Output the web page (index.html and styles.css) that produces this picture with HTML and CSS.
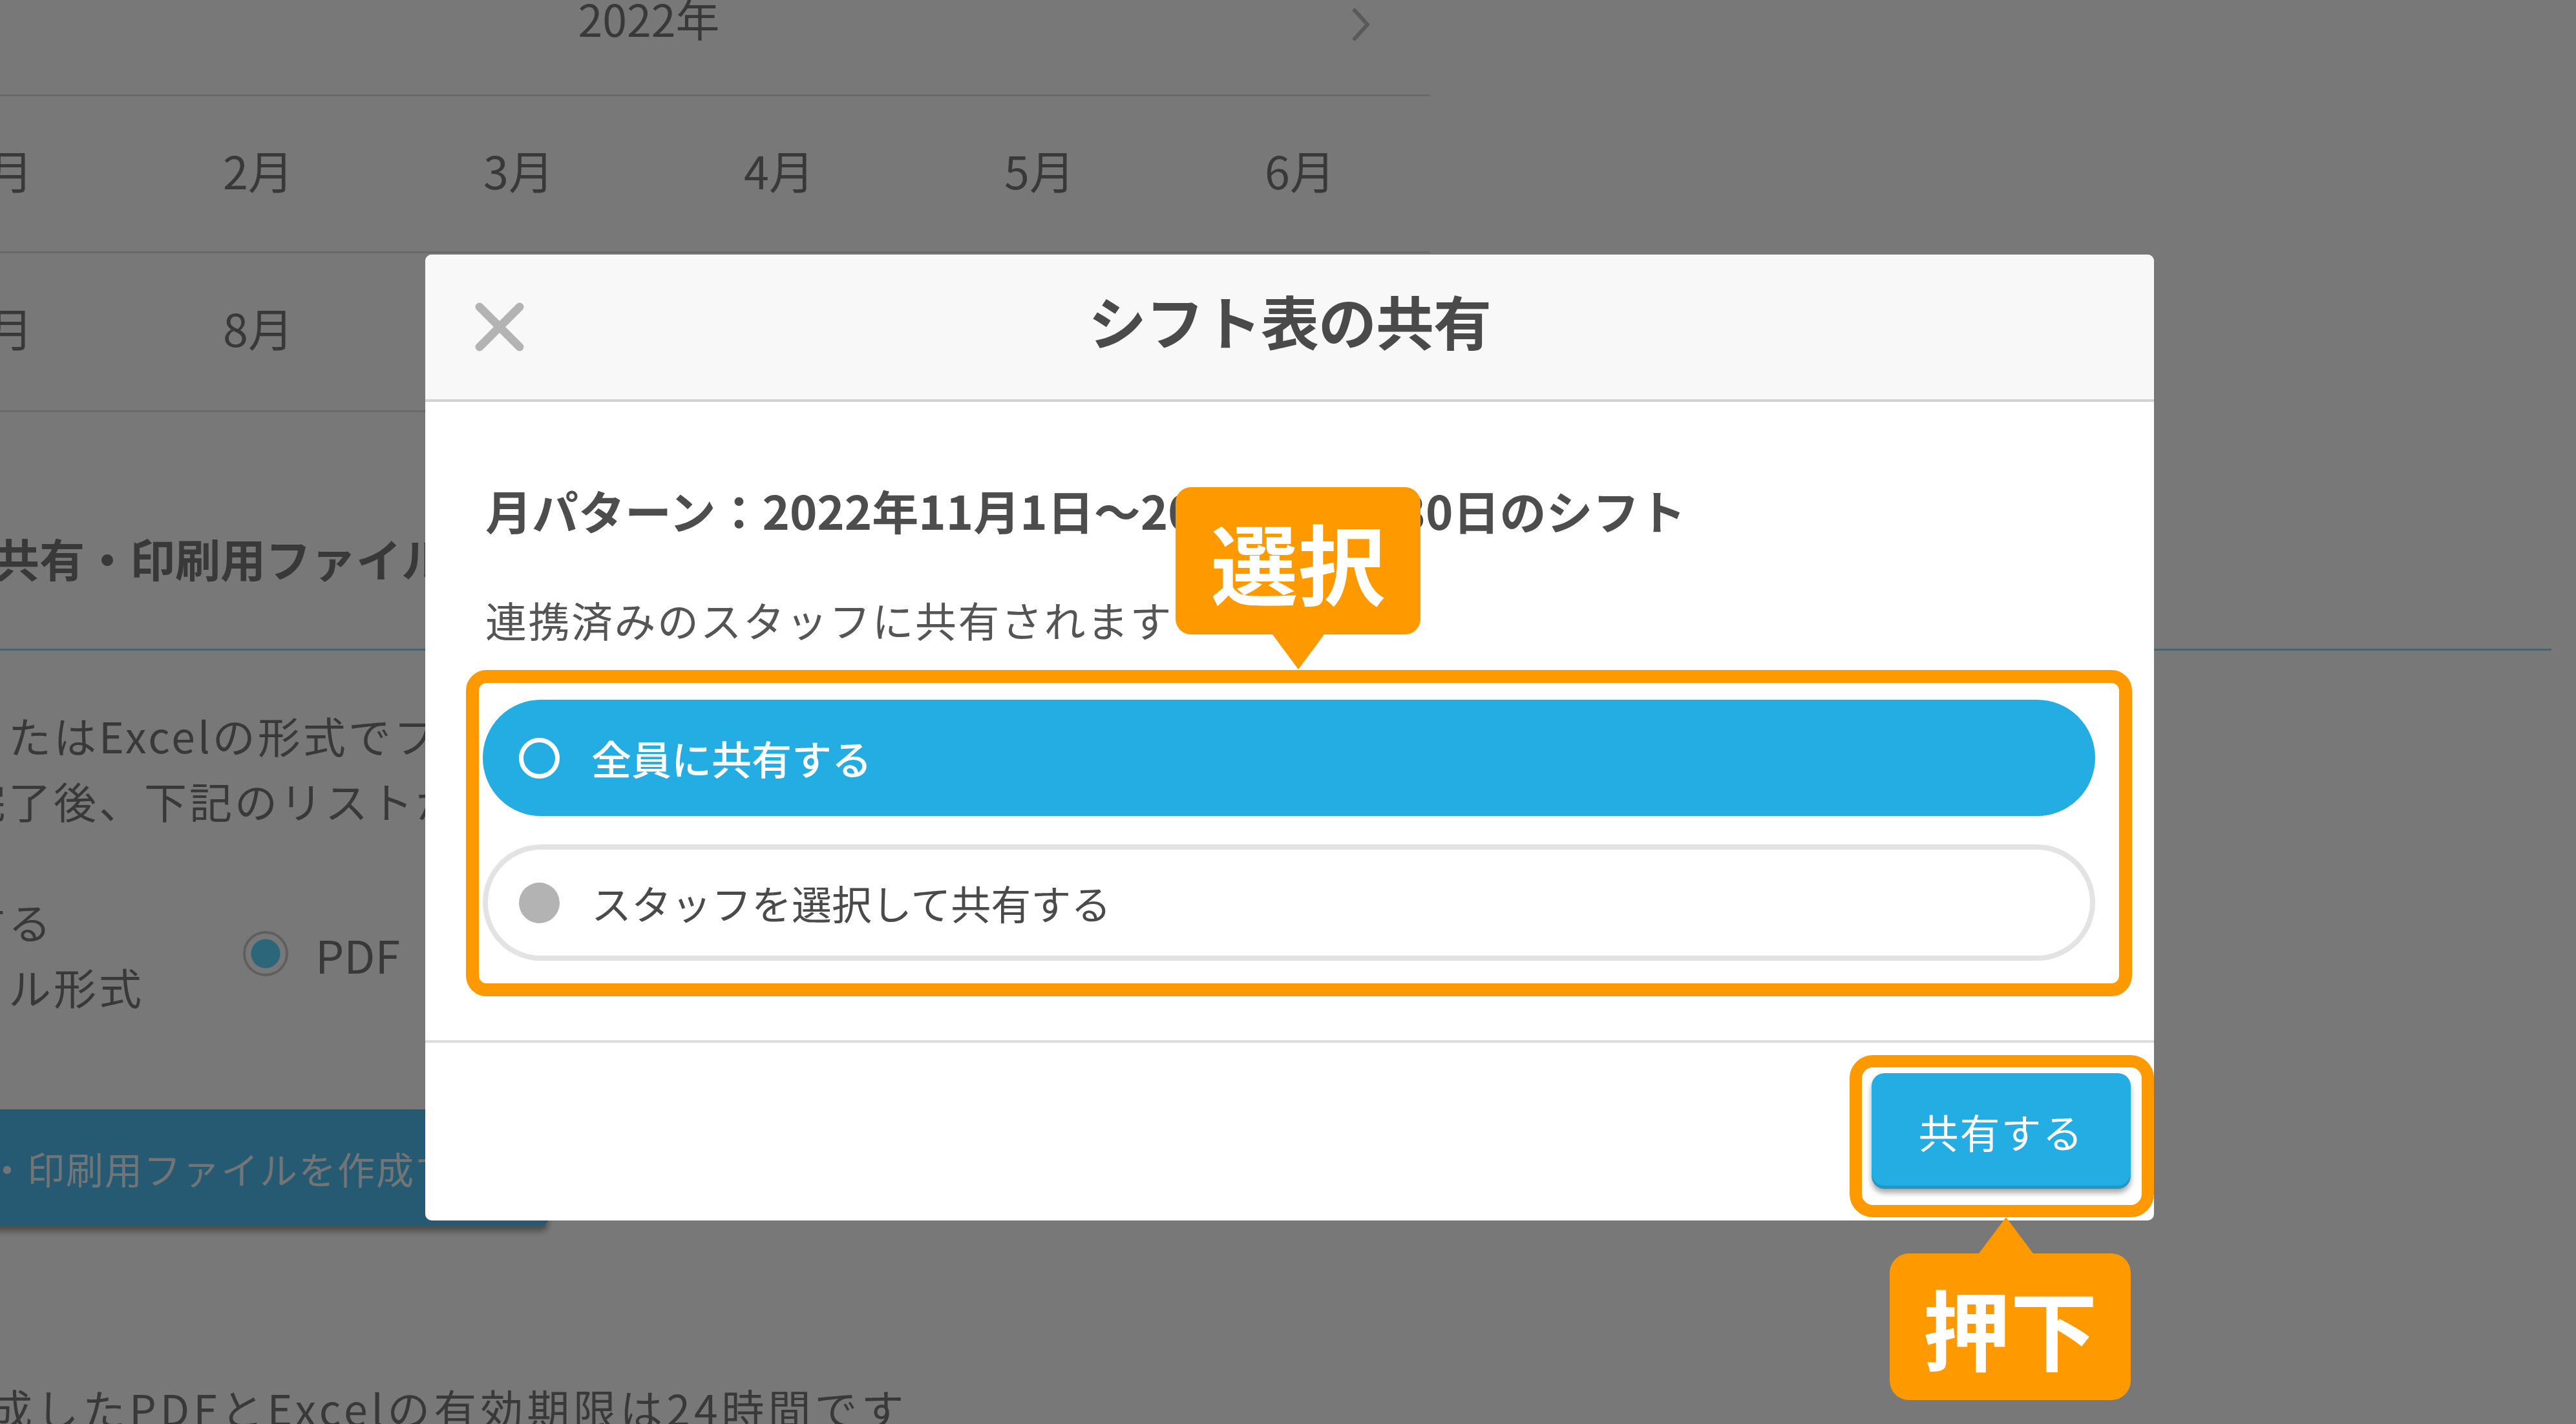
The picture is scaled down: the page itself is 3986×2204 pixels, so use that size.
FILE: index.html
```html
<!doctype html>
<html lang="ja">
  <head>
    <meta charset="utf-8" />
    <title>シフト表の共有</title>
    <meta name="viewport" content="width = device-width, initial-scale = 1" />
    <link rel="stylesheet" href="styles.css">
  </head>
  <body>
    <div id="page">
      <div class="calendar">
        <div class="year-row">
          <span></span>
          <span class="year">2022年</span>
          <svg class="next" width="28" height="52" viewBox="0 0 28 52">
            <polyline points="4,4 24,26 4,48" />
          </svg>
        </div>
        <div class="months">
          <span>1月</span><span>2月</span><span>3月</span>
          <span>4月</span><span>5月</span><span>6月</span>
        </div>
        <div class="months">
          <span>7月</span><span>8月</span><span>9月</span>
          <span>10月</span><span>11月</span><span>12月</span>
        </div>
      </div>

      <div class="files">
        <h2 class="files-title">共有・印刷用ファイル作成</h2>
        <p class="files-desc">
          またはExcelの形式でファイルを作成します。<br />
          完了後、下記のリストからダウンロードできます。
        </p>
        <div class="format-row">
          <div class="format-label">共有する<br />ファイル形式</div>
          <span class="format-radio"></span>
          <span class="format-name">PDF</span>
        </div>
        <div class="files-btn">共有・印刷用ファイルを作成する</div>
        <p class="files-note">作成したPDFとExcelの有効期限は24時間です</p>
      </div>
    </div>

    <div class="overlay"></div>

    <div class="modal">
      <div class="modal-header">
        <svg class="close" width="76" height="76" viewBox="0 0 76 76">
          <line x1="7" y1="7" x2="69" y2="69" />
          <line x1="69" y1="7" x2="7" y2="69" />
        </svg>
        <h1 class="modal-title">シフト表の共有</h1>
        <span></span>
      </div>

      <div class="modal-body">
        <p class="period">月パターン：2022年11月1日〜2022年11月30日のシフト</p>
        <p class="lead">連携済みのスタッフに共有されます</p>
        <div class="options">
          <div class="option is-selected">
            <span class="radio"></span>
            <span>全員に共有する</span>
          </div>
          <div class="option">
            <span class="radio"></span>
            <span>スタッフを選択して共有する</span>
          </div>
          <span class="mark mark-options"></span>
        </div>
      </div>

      <div class="modal-footer">
        <div class="share-wrap">
          <button class="share-btn">共有する</button>
          <span class="mark mark-share"></span>
          <span class="callout callout-press">押下</span>
        </div>
      </div>

      <span class="callout callout-select">選択</span>
    </div>
  </body>
</html>
```

FILE: styles.css
```css
body,
html {
  margin: 0;
  width: 3986px;
  height: 2204px;
  overflow: hidden;
  background-color: white;
}

#page {
  height: 2204px;
  overflow: hidden;
  color: #7a7a7a;
  font-family: "Noto Sans CJK JP", "Noto Sans", sans-serif;
}

/* calendar (background) */
.calendar {
  width: 2418px;
  margin-left: -205px;
}

.year-row {
  height: 146px;
  border-bottom: 3px solid #e0e0e0;
  display: grid;
  grid-template-columns: 1fr auto 1fr;
  align-items: start;
}

.year {
  font-size: 68px;
  line-height: 56px;
}

.next {
  justify-self: end;
  margin: 12px 93px 0 0;
}

.next polyline {
  fill: none;
  stroke: #bfbfbf;
  stroke-width: 6;
  stroke-linecap: round;
  stroke-linejoin: round;
}

.months {
  height: 243px;
  box-sizing: border-box;
  padding-bottom: 14px;
  border-bottom: 3px solid #e0e0e0;
  display: grid;
  grid-template-columns: repeat(6, 1fr);
  align-items: center;
  justify-items: center;
  font-size: 70px;
}

.months + .months {
  height: 246px;
}

/* files section (background) */
.files {
  margin-top: 176px;
}

.files-title {
  width: 3957px;
  margin: 0 0 0 -9px;
  padding-bottom: 90px;
  border-bottom: 3px solid #93d5ee;
  font-size: 70px;
  line-height: 100px;
  font-weight: bold;
}

.files-desc {
  margin: 80px 0 0 -57px;
  font-size: 66px;
  line-height: 101px;
  letter-spacing: 4px;
}

.format-row {
  display: flex;
  align-items: center;
  margin: 86px 0 0 -197px;
}

.format-label {
  width: 420px;
  margin-right: 153px;
  font-size: 66px;
  line-height: 101px;
  letter-spacing: 4px;
  white-space: nowrap;
}

.format-radio {
  width: 70px;
  height: 70px;
  box-sizing: border-box;
  border: 4px solid #c9c9c9;
  border-radius: 50%;
  background: radial-gradient(circle, #5bdbff 22px, transparent 23px);
}

.format-name {
  margin-left: 42px;
  font-size: 70px;
}

.files-btn {
  width: 1048px;
  height: 181px;
  box-sizing: border-box;
  margin: 140px 0 0 -200px;
  padding-left: 62px;
  display: flex;
  align-items: center;
  background-color: #4fbff3;
  border-radius: 0 12px 12px 0;
  box-shadow: 0 8px 10px rgba(0, 0, 0, 0.35);
  color: #f2f8fb;
  font-size: 58px;
  letter-spacing: 2px;
}

.files-note {
  margin: 230px 0 0 -88px;
  font-size: 66px;
  line-height: 100px;
  letter-spacing: 6px;
  white-space: nowrap;
}

.overlay {
  position: fixed;
  inset: 0;
  background-color: rgba(0, 0, 0, 0.53);
}

/* modal */
.modal {
  position: absolute;
  left: 658px;
  top: 394px;
  width: 2675px;
  background-color: white;
  border-radius: 10px;
  font-family: "Noto Sans CJK JP", "Noto Sans", sans-serif;
}

.modal-header {
  height: 224px;
  display: grid;
  grid-template-columns: 1fr auto 1fr;
  align-items: center;
  background-color: #f8f8f8;
  border-bottom: 4px solid #d2d2d2;
  border-radius: 10px 10px 0 0;
}

.close {
  margin-left: 77px;
}

.close line {
  stroke: #b3b3b3;
  stroke-width: 13;
  stroke-linecap: round;
}

.modal-title {
  margin: 0 0 22px 0;
  font-size: 90px;
  font-weight: bold;
  letter-spacing: -1px;
  color: #4a4a4a;
}

.modal-body {
  padding: 117px 91px 123px 89px;
}

.period {
  margin: 0 0 0 4px;
  font-size: 72px;
  line-height: 100px;
  font-weight: bold;
  color: #4d4d4d;
}

.lead {
  margin: 74px 0 0 4px;
  font-size: 64px;
  line-height: 90px;
  letter-spacing: 2.5px;
  color: #555555;
}

.options {
  position: relative;
  margin-top: 80px;
}

.option {
  height: 180px;
  box-sizing: border-box;
  display: flex;
  align-items: center;
  gap: 49px;
  padding-left: 48px;
  border: 8px solid #e3e3e3;
  border-radius: 90px;
  font-size: 62px;
  color: #4a4a4a;
}

.option + .option {
  margin-top: 44px;
}

.option.is-selected {
  background-color: #23ade2;
  border-color: #23ade2;
  color: white;
  font-weight: 500;
}

.radio {
  width: 63px;
  height: 63px;
  box-sizing: border-box;
  border-radius: 50%;
  background-color: #b3b3b3;
}

.is-selected .radio {
  background-color: transparent;
  border: 7px solid white;
}

.modal-footer {
  display: flex;
  justify-content: flex-end;
  padding: 47px 36px 49px;
  border-top: 4px solid #dddddd;
}

.share-wrap {
  position: relative;
}

.share-btn {
  display: block;
  width: 401px;
  height: 179px;
  border: 0;
  border-radius: 20px;
  background-color: #23ade2;
  box-shadow: inset 0 -5px 0 rgba(0, 0, 0, 0.12), 0 6px 8px rgba(0, 0, 0, 0.35);
  color: white;
  font-family: "Noto Sans CJK JP", "Noto Sans", sans-serif;
  font-size: 62px;
  letter-spacing: 2px;
}

/* orange annotations */
.mark {
  position: absolute;
  border: 20px solid #ff9900;
  pointer-events: none;
}

.mark-options {
  left: -26px;
  right: -57px;
  top: -46px;
  bottom: -55px;
  border-radius: 32px;
}

.mark-share {
  left: -34px;
  right: -36px;
  top: -28px;
  bottom: -44px;
  border-width: 19px;
  border-radius: 36px;
}

.callout {
  position: absolute;
  display: flex;
  align-items: center;
  justify-content: center;
  background-color: #ff9900;
  color: white;
  font-size: 135px;
  font-weight: bold;
  line-height: 1;
}

.callout::after {
  content: "";
  position: absolute;
  left: 50%;
  margin-left: -40px;
  border-left: 40px solid transparent;
  border-right: 40px solid transparent;
}

.callout-select {
  left: 1161px;
  top: 360px;
  width: 379px;
  height: 228px;
  border-radius: 24px;
}

.callout-select::after {
  top: 100%;
  border-top: 54px solid #ff9900;
}

.callout-press {
  left: 28px;
  top: 279px;
  width: 373px;
  height: 227px;
  border-radius: 30px;
}

.callout-press::after {
  bottom: 100%;
  margin-left: -49px;
  border-left-width: 42px;
  border-right-width: 42px;
  border-bottom: 56px solid #ff9900;
}
```
